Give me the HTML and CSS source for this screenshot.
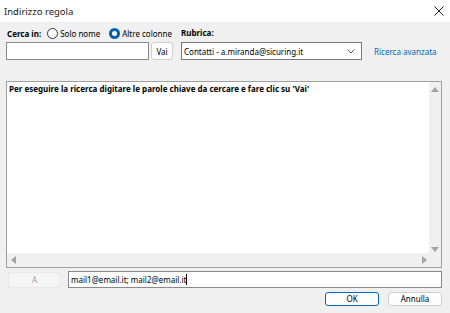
FILE: index.html
```html
<!DOCTYPE html>
<html lang="it">
<head>
    <title>Indirizzo regola</title>
    <link rel="stylesheet" href="styles.css">
</head>
<body>
    <!-- Title bar -->
    <div class="titlebar">
        <span class="title">Indirizzo regola</span>
        <svg class="close" width="10" height="10" viewBox="0 0 10 10">
            <path d="M0.5 0.5 L9.5 9.5 M9.5 0.5 L0.5 9.5" stroke="#1a1a1a" stroke-width="1"/>
        </svg>
    </div>

    <div class="dialog">
        <!-- Search options -->
        <div class="search-row">
            <div class="search-left">
                <div class="labels">
                    <strong>Cerca in:</strong>
                    <span class="radio"></span><span>Solo nome</span>
                    <span class="radio checked"></span><span>Altre colonne</span>
                </div>
                <div class="fields">
                    <input type="text" class="search-input">
                    <button class="btn vai">Vai</button>
                </div>
            </div>
            <div class="search-book">
                <strong>Rubrica:</strong>
                <div class="select">
                    <span>Contatti - a.miranda@sicuring.it</span>
                    <svg width="8" height="5" viewBox="0 0 8 5"><path d="M0.5 0.5 L4 4 L7.5 0.5" fill="none" stroke="#555" stroke-width="1"/></svg>
                </div>
            </div>
            <a href="#" class="advanced">Ricerca avanzata</a>
        </div>

        <!-- Result list -->
        <div class="list">
            <div class="list-main">
                <div class="list-body">Per eseguire la ricerca digitare le parole chiave da cercare e fare clic su 'Vai'</div>
                <div class="vscroll">
                    <span class="arrow up"></span>
                    <span class="arrow down"></span>
                </div>
            </div>
            <div class="hscroll">
                <span class="arrow left"></span>
                <span class="arrow right"></span>
                <span class="corner"></span>
            </div>
        </div>

        <!-- Recipients -->
        <div class="to-row">
            <button class="btn to-btn" disabled>A</button>
            <div class="to-input">mail1@email.it; mail2@email.it<span class="caret"></span></div>
        </div>

        <div class="actions">
            <button class="btn ok">OK</button>
            <button class="btn">Annulla</button>
        </div>
    </div>
    <span class="grip"></span>
</body>
</html>
```

FILE: styles.css
```css
* {
    margin: 0;
    padding: 0;
    box-sizing: border-box;
}

body {
    width: 450px;
    height: 313px;
    background-color: #f0f0f0;
    font-family: "Noto Sans", "Open Sans", sans-serif;
    font-size: 8px;
    color: #000;
    position: relative;
    overflow: hidden;
    white-space: nowrap;
}

.titlebar {
    height: 22px;
    background-color: #fff;
    display: flex;
    align-items: center;
    justify-content: space-between;
    padding: 0 6px 0 4px;
}

.title {
    font-size: 9.5px;
    color: #1a1a1a;
}

.dialog {
    padding: 4px 8px 0 6px;
}

/* Search options */
.search-row {
    display: flex;
    align-items: flex-start;
}

.search-left {
    width: 167px;
    flex-shrink: 0;
}

.labels {
    display: flex;
    align-items: center;
    height: 14px;
    padding-left: 1px;
    gap: 2px;
}

.labels strong {
    margin-right: 4px;
}

.labels span + .radio {
    margin-left: 7px;
}

.radio {
    width: 11px;
    height: 11px;
    flex-shrink: 0;
    border: 1px solid #333;
    border-radius: 50%;
    background-color: #fff;
    display: inline-block;
}

.radio.checked {
    border: 3px solid #005fb8;
}

.fields {
    display: flex;
    gap: 2px;
    margin-top: 2px;
}

.search-input {
    width: 143px;
    height: 18px;
    border: 1px solid #8a8a8a;
    background-color: #fff;
}

.btn {
    font-family: inherit;
    font-size: 8px;
    color: #000;
    background-color: #fdfdfd;
    border: 1px solid #d0d0d0;
    border-radius: 3px;
}

.vai {
    width: 22px;
    height: 18px;
}

.search-book {
    margin-left: 8px;
    flex-shrink: 0;
}

.search-book strong {
    display: block;
    height: 14px;
    line-height: 14px;
}

.select {
    width: 181px;
    height: 18px;
    margin-top: 2px;
    border: 1px solid #7a7a7a;
    background-color: #fff;
    display: flex;
    align-items: center;
    justify-content: space-between;
    padding: 0 6px 0 2px;
}

.advanced {
    color: #0067c0;
    text-decoration: none;
    margin: 20px 0 0 12px;
}

/* Result list */
.list {
    margin-top: 21px;
    width: 436px;
    height: 187px;
    border: 1px solid #a0a0a0;
    display: flex;
    flex-direction: column;
}

.list-main {
    flex: 1;
    display: flex;
}

.list-body {
    flex: 1;
    background-color: #fff;
    font-weight: bold;
    padding: 1px 2px;
}

.vscroll {
    width: 12px;
    background-color: #f0f0f0;
    display: flex;
    flex-direction: column;
    justify-content: space-between;
    align-items: center;
    padding: 5px 0 1px;
}

.hscroll {
    height: 14px;
    background-color: #f0f0f0;
    display: flex;
    align-items: center;
    padding-left: 4px;
}

.arrow {
    width: 0;
    height: 0;
    border: 4px solid transparent;
}

.arrow.up {
    border-bottom: 5px solid #a3a3a3;
    border-top-width: 0;
}

.arrow.down {
    border-top: 5px solid #a3a3a3;
    border-bottom-width: 0;
}

.arrow.left {
    border-right: 5px solid #a3a3a3;
    border-left-width: 0;
}

.arrow.right {
    border-left: 5px solid #a3a3a3;
    border-right-width: 0;
    margin-left: auto;
}

.corner {
    width: 14px;
}

/* Recipients */
.to-row {
    display: flex;
    align-items: center;
    margin-top: 3px;
}

.to-btn {
    width: 53px;
    height: 16px;
    margin-left: 2px;
    background-color: #f5f5f5;
    border-color: #e8e8e8;
    color: #a0a0a0;
}

.to-input {
    margin-left: 7px;
    width: 374px;
    height: 17px;
    background-color: #fff;
    border: 1px solid #8a8a8a;
    padding: 1px 2px;
    display: flex;
    align-items: center;
}

.caret {
    width: 1px;
    height: 11px;
    background-color: #000;
}

.actions {
    display: flex;
    justify-content: flex-end;
    gap: 9px;
    margin-top: 4px;
}

.actions .btn {
    width: 54px;
    height: 14px;
    line-height: 12px;
}

.actions .ok {
    border: 1px solid #0067c0;
}

.grip {
    position: absolute;
    right: 2px;
    bottom: 2px;
    width: 6px;
    height: 6px;
    background: radial-gradient(circle, #bdbdbd 40%, transparent 45%) 0 0 / 2px 2px;
    clip-path: polygon(100% 0, 100% 100%, 0 100%);
}
```
